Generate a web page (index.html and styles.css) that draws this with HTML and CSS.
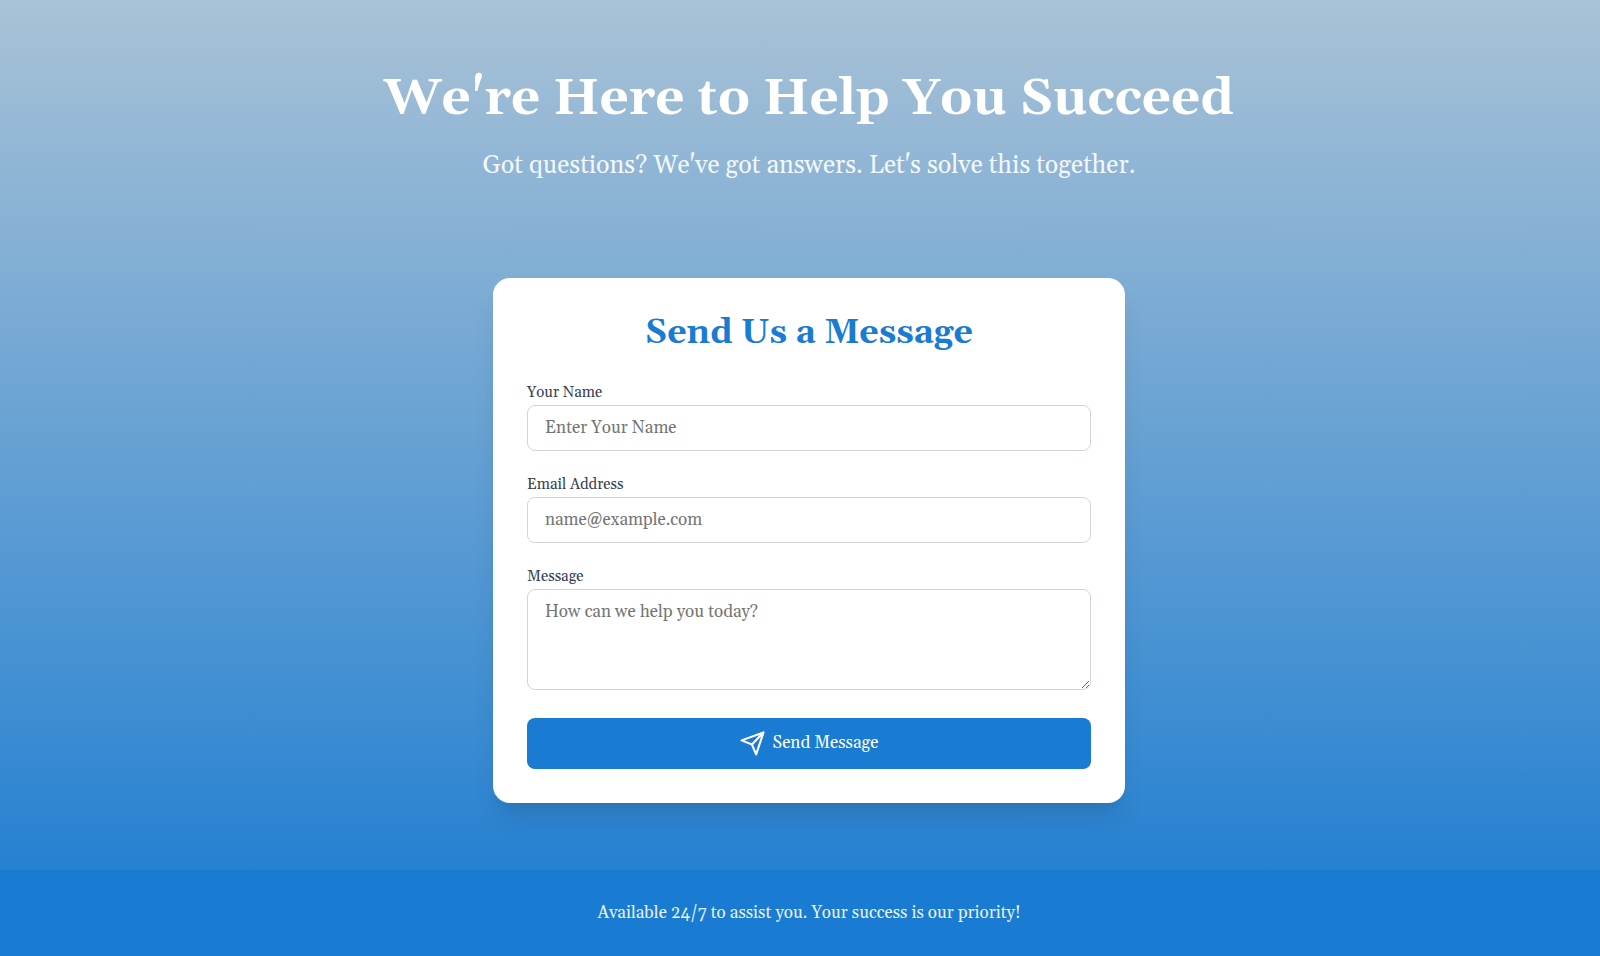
FILE: index.html
```html
<!DOCTYPE html>
<html lang="en">
<head>
<meta charset="utf-8">
<meta name="viewport" content="width=device-width, initial-scale=1">
<title>Contact Us</title>
<link rel="stylesheet" href="styles.css">
</head>
<body>
<div class="page">
  <header class="hero">
    <h1 class="hero-title">We're Here to Help You Succeed</h1>
    <p class="hero-subtitle">Got questions? We've got answers. Let's solve this together.</p>
  </header>
  <main class="content">
    <form class="card">
      <h2 class="card-title">Send Us a Message</h2>
      <div class="field">
        <label class="label" for="name">Your Name</label>
        <input class="control" id="name" type="text" placeholder="Enter Your Name">
      </div>
      <div class="field">
        <label class="label" for="email">Email Address</label>
        <input class="control" id="email" type="email" placeholder="name@example.com">
      </div>
      <div class="field">
        <label class="label" for="message">Message</label>
        <textarea class="control control-area" id="message" placeholder="How can we help you today?"></textarea>
      </div>
      <button class="submit" type="submit">
        <svg class="submit-icon" viewBox="0 0 24 24" fill="none" stroke="currentColor" stroke-width="2" stroke-linecap="round" stroke-linejoin="round" aria-hidden="true"><path d="M22.500 1.500 15.500 22.500 11.500 13 1.500 9Z"/><path d="M22.500 1.500 11.500 13"/></svg>
        Send Message
      </button>
    </form>
  </main>
  <footer class="footer">
    <p class="footer-text">Available 24/7 to assist you. Your success is our priority!</p>
  </footer>
</div>
</body>
</html>
```
FILE: styles.css
```css
* {
  box-sizing: border-box;
}

body {
  margin: 0;
  font-family: Georgia, Gelasio, "Liberation Serif", serif;
  font-size: 17px;
  line-height: 25px;
}

h1, h2, p {
  margin: 0;
}

.page {
  display: flex;
  flex-direction: column;
  min-height: 100vh;
  background: linear-gradient(to bottom, #a9c2d6, #197bd1);
}

.hero {
  padding: 69px 0 63px 18px;
  text-align: center;
  color: #fff;
}

.hero-title {
  margin-bottom: 20px;
  font-size: 51px;
  line-height: 60px;
}

.hero-subtitle {
  font-size: 25px;
  line-height: 34px;
  opacity: 0.9;
}

.content {
  flex: 1;
  padding: 32px 0 67px 18px;
}

.card {
  display: flex;
  flex-direction: column;
  width: 100%;
  max-width: 632px;
  margin: 0 auto;
  padding: 34px;
  border-radius: 17px;
  background: #fff;
  box-shadow: 0 20px 26px -5px rgba(0, 0, 0, 0.1), 0 8px 10px -5px rgba(0, 0, 0, 0.04);
}

.card-title {
  margin-bottom: 30px;
  font-size: 34px;
  line-height: 42px;
  text-align: center;
  color: #197bd1;
}

.field {
  display: flex;
  flex-direction: column;
  gap: 4px;
  margin-bottom: 25px;
}

.field:last-of-type {
  margin-bottom: 28px;
}

.label {
  font-size: 15px;
  line-height: 17px;
  color: #374151;
}

.control {
  width: 100%;
  height: 46px;
  padding: 12px 17px;
  border: 1px solid #d1d5db;
  border-radius: 8px;
  background: #fff;
  font: inherit;
  line-height: 20px;
}

.control::placeholder {
  color: #757575;
}

.control-area {
  height: 101px;
  resize: vertical;
}

.submit {
  display: flex;
  align-items: center;
  justify-content: center;
  gap: 8px;
  height: 51px;
  border: 0;
  border-radius: 8px;
  background: #197bd1;
  color: #fff;
  font: inherit;
}

.submit-icon {
  width: 25px;
  height: 25px;
}

.footer {
  padding: 31px 0 30px 18px;
  background: #197bd1;
  text-align: center;
  color: #fff;
}

.footer-text {
  opacity: 0.9;
}
```
